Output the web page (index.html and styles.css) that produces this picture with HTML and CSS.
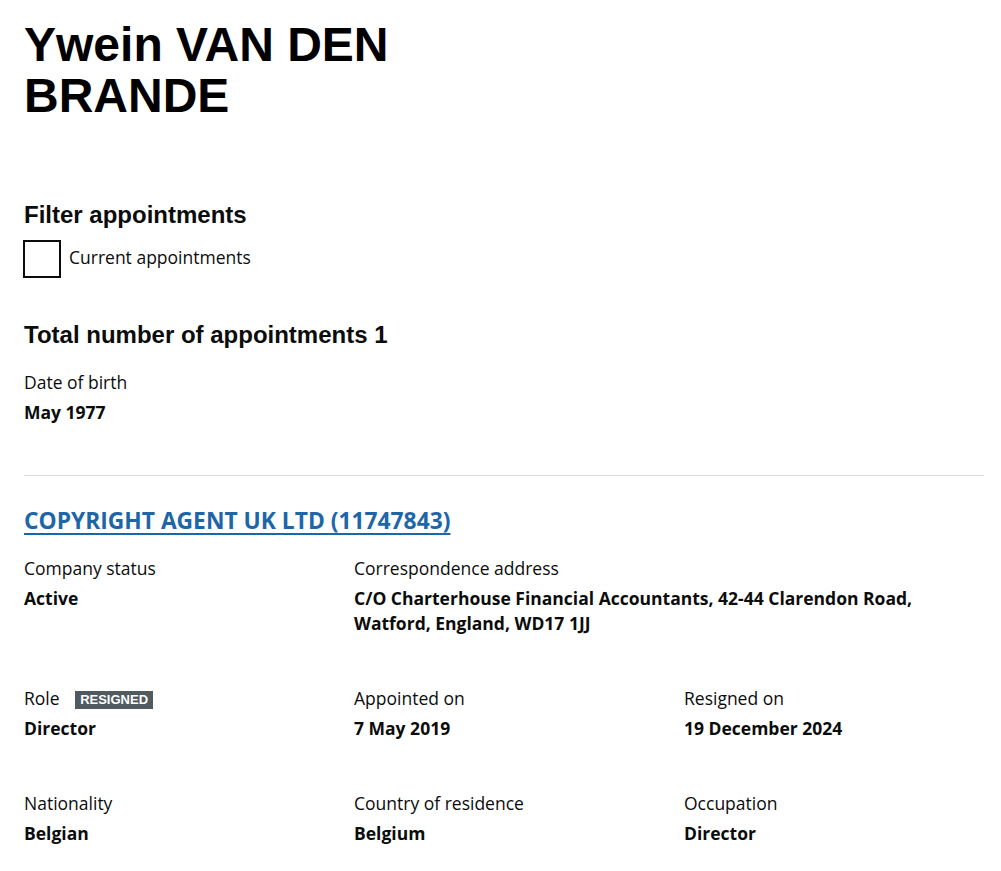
FILE: index.html
```html
<!DOCTYPE html>
<html lang="en">
<head>
<meta charset="utf-8">
<title>Ywein VAN DEN BRANDE personal appointments</title>
<link rel="stylesheet" href="styles.css">
</head>
<body>
<main class="page">
  <h1 class="title">Ywein VAN DEN BRANDE</h1>

  <h2 class="heading-m filter-heading">Filter appointments</h2>
  <div class="checkbox">
    <span class="checkbox-box"></span>
    <label class="checkbox-label">Current appointments</label>
  </div>

  <h2 class="heading-l total">Total number of appointments 1</h2>

  <dl class="dob">
    <dt class="label">Date of birth</dt>
    <dd class="value">May 1977</dd>
  </dl>

  <hr class="divider">

  <h2 class="company"><a class="company-link" href="#">COPYRIGHT AGENT UK LTD (11747843)</a></h2>

  <div class="grid">
    <dl class="item">
      <dt class="label">Company status</dt>
      <dd class="value">Active</dd>
    </dl>
    <dl class="item span-2">
      <dt class="label">Correspondence address</dt>
      <dd class="value">C/O Charterhouse Financial Accountants, 42-44 Clarendon Road,<br>Watford, England, WD17 1JJ</dd>
    </dl>

    <dl class="item">
      <dt class="label">Role <span class="tag">Resigned</span></dt>
      <dd class="value">Director</dd>
    </dl>
    <dl class="item">
      <dt class="label">Appointed on</dt>
      <dd class="value">7 May 2019</dd>
    </dl>
    <dl class="item">
      <dt class="label">Resigned on</dt>
      <dd class="value">19 December 2024</dd>
    </dl>

    <dl class="item">
      <dt class="label">Nationality</dt>
      <dd class="value">Belgian</dd>
    </dl>
    <dl class="item">
      <dt class="label">Country of residence</dt>
      <dd class="value">Belgium</dd>
    </dl>
    <dl class="item">
      <dt class="label">Occupation</dt>
      <dd class="value">Director</dd>
    </dl>
  </div>
</main>
</body>
</html>
```
FILE: styles.css
```css
html, body {
  margin: 0;
  padding: 0;
  background: #ffffff;
}

body {
  font-family: "Open Sans", "Noto Sans", sans-serif;
  font-size: 17.5px;
  line-height: 25px;
  color: #0b0c0c;
}

.page {
  width: 960px;
  margin: 0 0 0 24px;
  padding: 19px 0 40px;
}

.title {
  font-family: "Liberation Sans", Arial, sans-serif;
  font-weight: 700;
  font-size: 48px;
  line-height: 51px;
  max-width: 450px;
  margin: 0;
  color: #000000;
}

.heading-m,
.heading-l {
  font-family: "Liberation Sans", Arial, sans-serif;
  font-weight: 700;
  font-size: 24px;
  line-height: 30px;
  margin: 0;
  color: #0b0c0c;
}

.filter-heading {
  margin-top: 79px;
}

.checkbox {
  display: flex;
  align-items: flex-start;
  margin-top: 10px;
  height: 38px;
}

.checkbox-box {
  box-sizing: border-box;
  width: 38px;
  height: 38px;
  border: 2px solid #0b0c0c;
  margin-left: -1px;
  flex: none;
}

.checkbox-label {
  padding-top: 5px;
  margin-left: 8px;
}

.total {
  margin-top: 42px;
}

.dob {
  margin: 20px 0 0;
}

.label {
  margin: 0;
  font-weight: 400;
}

.value {
  margin: 5px 0 0;
  font-weight: 700;
}

.divider {
  border: 0;
  border-top: 1px solid #dedede;
  height: 0;
  margin: 50px 0 0;
}

.company {
  margin: 30px 0 0;
  font-size: 22.8px;
  line-height: 30px;
  font-weight: 700;
}

.company-link {
  color: #1d66a8;
  text-decoration: underline;
  text-decoration-thickness: 2px;
  text-underline-offset: 4px;
}

.grid {
  display: grid;
  grid-template-columns: 300px 300px 300px;
  column-gap: 30px;
  row-gap: 50px;
  margin-top: 20px;
}

.item {
  margin: 0;
}

.span-2 {
  grid-column: span 2;
}

.tag {
  display: inline-block;
  margin-left: 11px;
  padding: 0 5px;
  font-family: "Liberation Sans", Arial, sans-serif;
  font-weight: 700;
  font-size: 13px;
  line-height: 18px;
  text-transform: uppercase;
  color: #ffffff;
  background: #505a5f;
  vertical-align: 1.5px;
}
```
